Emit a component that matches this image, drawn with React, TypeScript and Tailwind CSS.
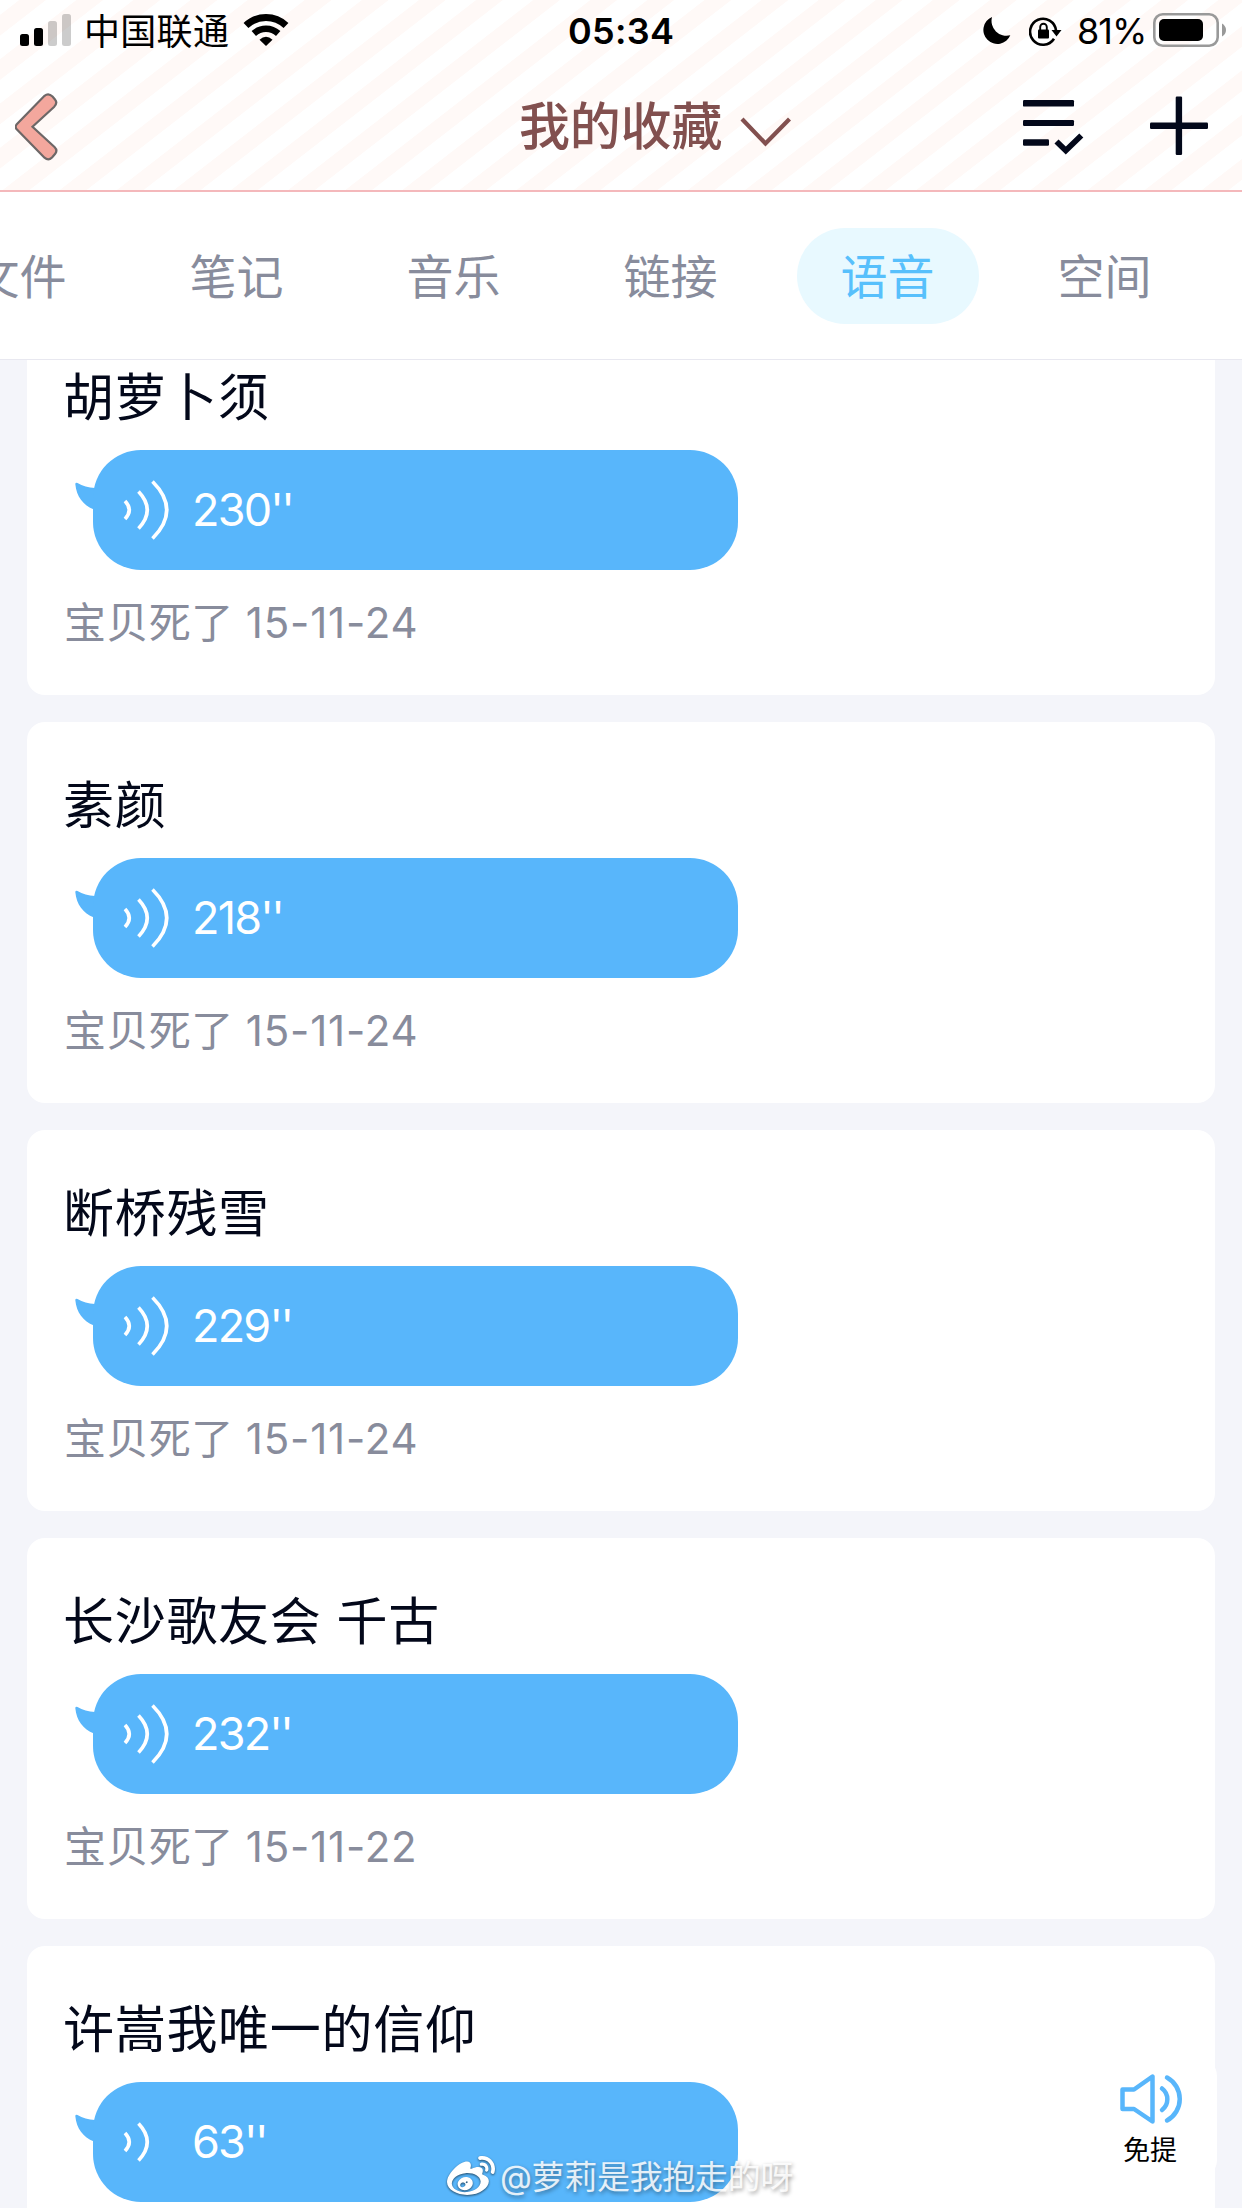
import { FaWeibo } from "react-icons/fa";

type Voice = {
  title: string;
  seconds: number;
  author: string;
  date: string;
};

const tabs = ["文件", "笔记", "音乐", "链接", "语音", "空间"];

const voices: Voice[] = [
  { title: "胡萝卜须", seconds: 230, author: "宝贝死了", date: "15-11-24" },
  { title: "素颜", seconds: 218, author: "宝贝死了", date: "15-11-24" },
  { title: "断桥残雪", seconds: 229, author: "宝贝死了", date: "15-11-24" },
  { title: "长沙歌友会 千古", seconds: 232, author: "宝贝死了", date: "15-11-22" },
  { title: "许嵩我唯一的信仰", seconds: 63, author: "宝贝死了", date: "15-11-24" },
];

function StatusBar() {
  return (
    <div className="flex h-[60px] items-start text-black">
      <svg className="mt-[14px] ml-5 h-8 w-[52px] shrink-0" viewBox="0 0 52 32">
        <rect x="0" y="20" width="9" height="12" rx="2.5" />
        <rect x="14" y="14" width="9" height="18" rx="2.5" />
        <rect x="28" y="7" width="9" height="25" rx="2.5" opacity="0.2" />
        <rect x="42" y="0" width="9" height="32" rx="2.5" opacity="0.2" />
      </svg>
      <span className="mt-[12px] ml-[12px] w-[151px] text-[36px] leading-[40px] tracking-[0.3px] whitespace-nowrap">
        中国联通
      </span>
      {/* wifi */}
      <svg className="mt-[13px] ml-2 h-[34px] w-[46px] shrink-0" viewBox="0 0 46 34" fill="none" stroke="#000">
        <path d="M3 12.5a29 29 0 0 1 40 0" strokeWidth="7" />
        <path d="M10.800 20.500a18 18 0 0 1 24.400 0" strokeWidth="6.500" />
        <path d="M16.500 26.800q6.500-6 13 0L23 33z" fill="#000" stroke="none" />
      </svg>
      <span className="mt-[11px] ml-[279px] w-[106px] text-center text-[36px] leading-[40px] font-semibold tracking-[0.3px] whitespace-nowrap">
        05:34
      </span>
      <svg className="mt-[17px] ml-[308px] h-7 w-[29px] shrink-0" viewBox="0 0 29 28">
        <path d="M10 0A14 14 0 1 0 28.300 18.300A15 15 0 0 1 10 0z" />
      </svg>
      {/* rotation lock */}
      <svg className="mt-[16px] ml-[18px] h-[31px] w-[33px] shrink-0" viewBox="0 0 33 31" fill="none" stroke="#000">
        <path d="M27 14.500A13 13 0 1 0 25 22.800" strokeWidth="2.600" />
        <path d="M22.500 14h10l-5 6.500z" fill="#000" stroke="none" />
        <rect x="9" y="13.500" width="11" height="9" rx="1" fill="#000" stroke="none" />
        <path d="M11.200 14v-3a3.300 3.300 0 0 1 6.600 0v3" strokeWidth="1.900" />
      </svg>
      <span className="mt-[11px] ml-[15px] w-[70px] text-[36px] leading-[40px] tracking-[-0.9px] whitespace-nowrap">
        81%
      </span>
      <svg className="mt-[13px] ml-[6px] h-[34px] w-[73px] shrink-0" viewBox="0 0 73 34">
        <rect x="1.300" y="1.300" width="63.400" height="31.400" rx="8.500" fill="none" stroke="#999" strokeWidth="2.600" />
        <rect x="6" y="6" width="44" height="22" rx="5" />
        <path d="M69 10.500q4 2.500 4 6.500t-4 6.500z" fill="#999" />
      </svg>
    </div>
  );
}

function NavBar() {
  return (
    <div className="flex h-[130px] items-start">
      <svg className="mt-[33px] ml-[15px] h-[68px] w-[43px] shrink-0" viewBox="0 0 43 68">
        <path
          d="M1.500 31.600L29.500 2.800Q33.500-.4 37.500 3.500L40 6.500Q43 10 39 14L17.500 33.700L39.500 54Q43 57.500 40 61L37 64.500Q33.500 68 29.500 64.700L1.500 36Q-.2 33.800 1.500 31.600z"
          fill="#f3a79d"
          stroke="#6d6767"
          strokeWidth="2.200"
        />
      </svg>
      <h1 className="mt-[32px] ml-[461px] w-[211px] text-[51px] leading-[70px] font-medium tracking-[-0.2px] whitespace-nowrap text-[#82504f]">
        我的收藏
      </h1>
      <svg className="mt-[56px] ml-[10px] h-[31px] w-[52px] shrink-0" viewBox="0 0 52 31" fill="none">
        <path d="M2 3L25.500 27.500L49.500 3" stroke="#82504f" strokeWidth="4.200" />
      </svg>
      <svg className="mt-[40px] ml-[231px] h-[56px] w-[61px] shrink-0" viewBox="0 0 61 56" fill="#03081a">
        <rect x="0" y="0" width="51" height="6.600" rx="1.200" />
        <rect x="0" y="20" width="51" height="6" rx="1.200" />
        <rect x="0" y="39.300" width="26" height="6.400" rx="1.200" />
        <path d="M33.500 41.500L42.800 50.500L58.300 35.500" fill="none" stroke="#03081a" strokeWidth="5.800" />
      </svg>
      <svg className="mt-[36px] ml-[66px] h-[60px] w-[58px] shrink-0" viewBox="0 0 58 60" fill="#03081a">
        <rect x="25.700" y="0.500" width="6.400" height="58.500" rx="1.200" />
        <rect x="0" y="26.500" width="58" height="6.400" rx="1.200" />
      </svg>
    </div>
  );
}

function Tabs() {
  return (
    <div className="h-[168px] overflow-hidden border-b border-[#e8e8f0] bg-white">
      <div className="-ml-[89px] flex w-[1400px] pt-9">
        {tabs.map((tab) => (
          <div key={tab} className="flex w-[217px] shrink-0 justify-center">
            <div
              className={
                tab === "语音"
                  ? "h-24 w-[182px] rounded-full bg-[#e8f9ff] text-center text-[47px] leading-[97px] text-[#57c0fc]"
                  : "h-24 w-[182px] text-center text-[47px] leading-[97px] text-[#888c9c]"
              }
            >
              {tab}
            </div>
          </div>
        ))}
      </div>
    </div>
  );
}

function VoiceBubble({ seconds }: { seconds: number }) {
  return (
    <div className="flex h-[120px]">
      {/* tail */}
      <svg className="mt-8 -mr-[4px] h-7 w-[22px] shrink-0" viewBox="0 0 22 28" fill="#58b6fb">
        <path d="M.3 2Q.5.200 2.500 1Q10 5.500 20 6H22V28L19 27.500C8 23 1.500 14.500.3 2z" />
      </svg>
      <div className="flex w-[645px] items-center rounded-[48px] bg-[#58b6fb] text-white">
        <svg className="ml-[29px] h-[62px] w-[50px] shrink-0" viewBox="0 0 50 62" fill="none" stroke="#fff" strokeWidth="3.600">
          <path d="M3 22Q11.500 31 3 40" />
          <path d="M16.500 12.500Q34 31 16.500 49.500" />
          {seconds > 100 && <path d="M30.500 2.500Q59 31 30.500 59.500" />}
        </svg>
        <span className="ml-5 text-[45px] leading-[60px] font-normal tracking-[-1.8px] whitespace-nowrap">
          {seconds}
          <span className="tracking-[-2.5px]">''</span>
        </span>
      </div>
    </div>
  );
}

function VoiceCard({ voice }: { voice: Voice }) {
  return (
    <div className="h-[381px] shrink-0 rounded-[18px] bg-white">
      <h2 className="h-[136px] pt-[49px] pl-[36px] text-[51px] leading-[70px] tracking-[0.7px] whitespace-nowrap text-[#03081a]">
        {voice.title}
      </h2>
      <div className="pl-12">
        <VoiceBubble seconds={voice.seconds} />
      </div>
      <p className="mt-[23px] pl-[37px] text-[42px] leading-[60px] tracking-[0.4px] whitespace-nowrap text-[#888c9c]">
        {voice.author} <span className="tracking-[0.8px]">{voice.date}</span>
      </p>
    </div>
  );
}

export default function App() {
  return (
    <main className="relative h-[2208px] w-[1242px] overflow-hidden bg-[#f4f5fa] font-[Inter,'Noto_Sans_CJK_SC',sans-serif]">
      <header className="h-48 border-b-2 border-[#f4b8bb] bg-white bg-[repeating-linear-gradient(142.2deg,#fff_0px,#fff_11.5px,#fff9f7_12.1px,#fff9f7_27.9px,#fff_28.5px,#fff_35px)]">
        <StatusBar />
        <NavBar />
      </header>
      <Tabs />

      {/* the list is scrolled, so the first card starts under the tabs */}
      <div className="h-[1848px] overflow-hidden">
        <div className="-mt-[46px] flex flex-col gap-[27px] px-[27px]">
          {voices.map((voice) => (
            <VoiceCard key={voice.title} voice={voice} />
          ))}
        </div>
      </div>

      {/* speaker toggle */}
      <button className="absolute top-[2058px] left-[1085px] flex h-[120px] w-[132px] flex-col items-center rounded-[18px] bg-white">
        <svg className="mt-[14px] h-[54px] w-[64px]" viewBox="0 0 64 54" fill="none" stroke="#58b6fb" strokeWidth="4.500" strokeLinecap="round" strokeLinejoin="round">
          <path d="M3.500 17.500H15L33.500 4.500V49.500L15 37H3.500z" />
          <path d="M43 16.500A13.500 13.500 0 0 1 43 38" />
          <path d="M48 5.500A24.500 24.500 0 0 1 48 48.500" />
        </svg>
        <span className="mt-[9px] mr-[2px] text-[27px] leading-[32px] text-black">免提</span>
      </button>

      {/* watermark */}
      <div className="absolute top-[2152px] left-[447px] flex items-center text-white/85">
        <FaWeibo className="h-[48px] w-[48px] text-white drop-shadow-[0_1px_1px_rgba(0,0,0,0.6)]" />
        <span className="ml-[5px] text-[33px] leading-[50px] tracking-[-0.3px] whitespace-nowrap [text-shadow:1px_2px_4px_rgba(0,0,0,0.4)]">
          @萝莉是我抱走的呀
        </span>
      </div>
    </main>
  );
}
